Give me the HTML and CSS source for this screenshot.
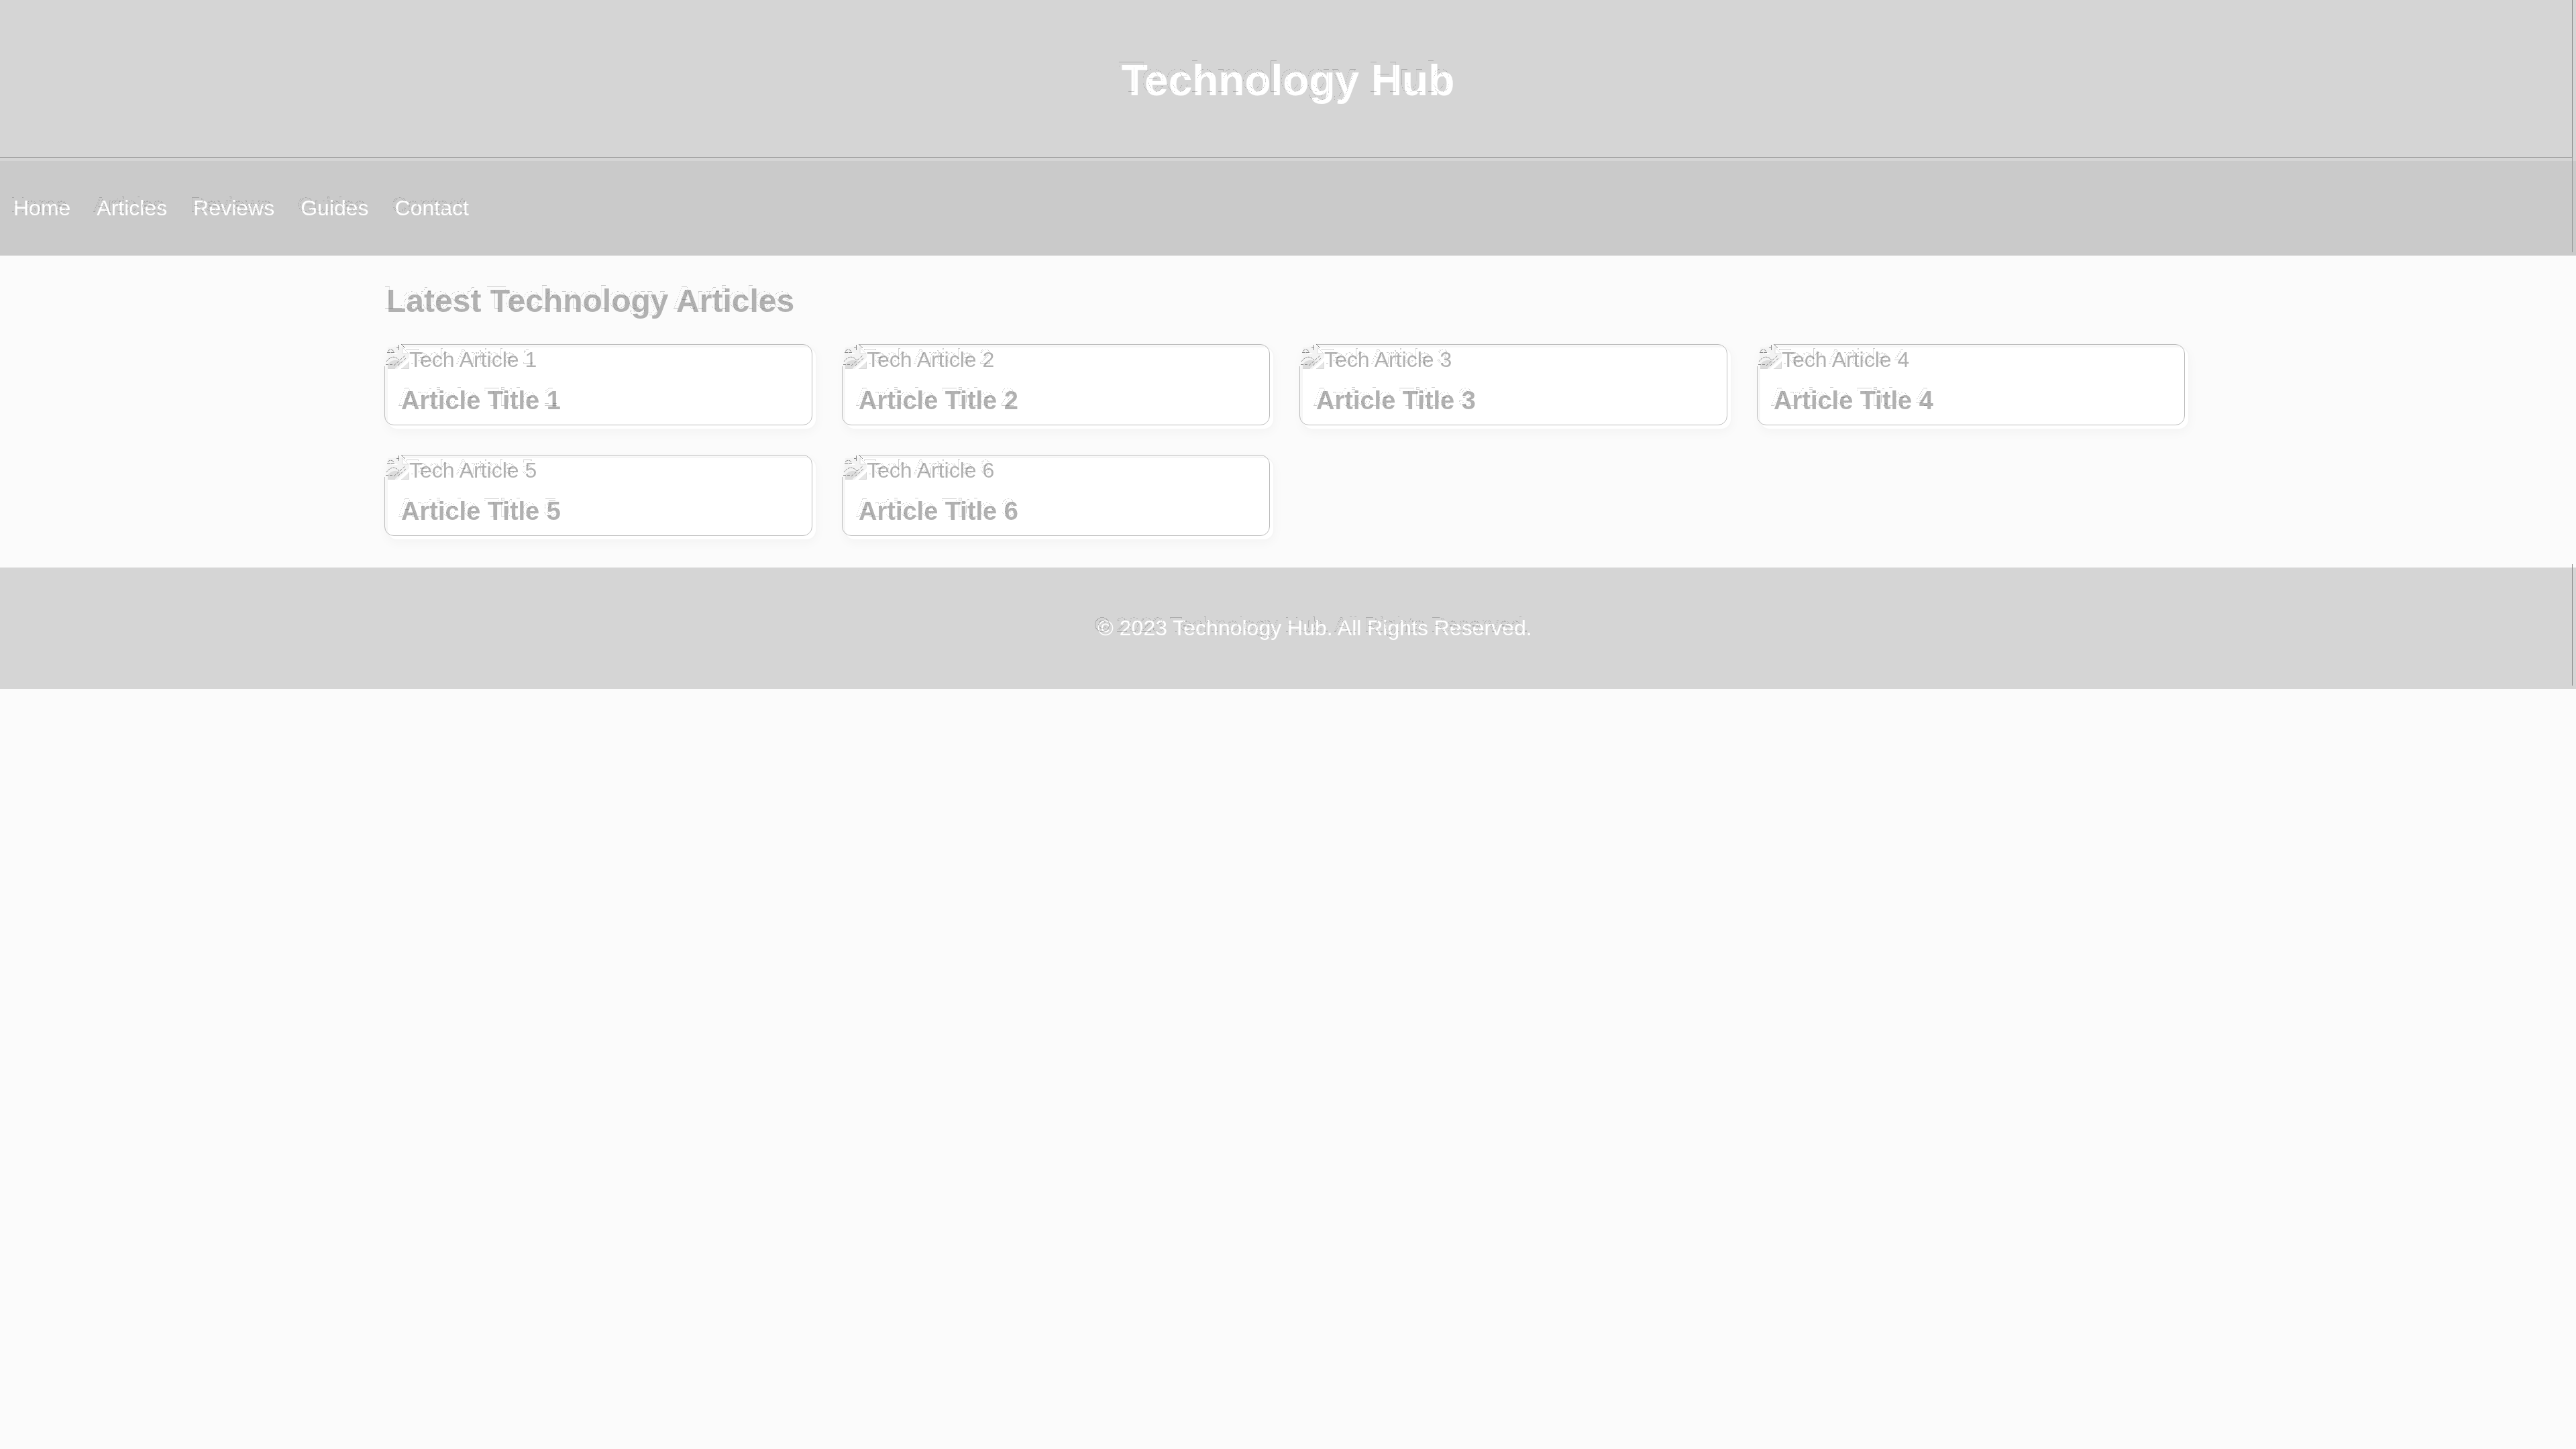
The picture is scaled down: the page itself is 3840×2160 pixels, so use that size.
FILE: index.html
```html
<!DOCTYPE html>
<html lang="en">
<head>
<meta charset="utf-8">
<title>Technology Hub</title>
<link rel="stylesheet" href="styles.css">
</head>
<body>
<svg class="defs" width="0" height="0" aria-hidden="true">
  <defs>
    <filter id="emboss" x="-5%" y="-30%" width="110%" height="160%" color-interpolation-filters="sRGB">
      <feConvolveMatrix in="SourceAlpha" order="3" kernelMatrix="0 -1 0 -1 4 -1 0 -1 0" divisor="1" preserveAlpha="false" result="edge"/>
      <feComponentTransfer in="edge" result="strong"><feFuncA type="linear" slope="1" intercept="-0.75"/></feComponentTransfer>
      <feFlood flood-color="#333333"/>
      <feComposite in2="strong" operator="in"/>
      <feOffset dx="-5" dy="-5" result="ghost"/>
      <feMerge><feMergeNode in="SourceGraphic"/><feMergeNode in="ghost"/></feMerge>
    </filter>
    <symbol id="broken" viewBox="0 0 32 32" overflow="visible">
      <path d="M0 0H22V9H32V15L14 32H0Z" fill="#f3f3f3"/>
      <path d="M22 0L31 9H22Z" fill="#fff" stroke="#dcdcdc"/>
      <path d="M6 10a5 4 0 0 1 9 0z" fill="#fff"/>
      <path d="M0 32V25Q10 14 20 22L10 32Z" fill="#dcdcdc"/>
      <path d="M20 32L32 21V32Z" fill="#e6e6e6"/>
      <path d="M0 31.500H11M20 31.500H31.500V21" fill="none" stroke="#d6d6d6"/>
      <g fill="none" stroke="#888">
        <path d="M-1 7.500H10M0 6a5 5 0 0 1 9 0" stroke-dasharray="5 1"/>
        <path d="M16.500 -4V4M13 .5H17M20 -5L26 1"/>
        <path d="M-2 21Q8 8 18 20" stroke-dasharray="3 1"/>
        <path d="M9 27L27 11M15 27L27 16M-3 25.500H7" stroke-dasharray="4 2"/>
      </g>
    </symbol>
  </defs>
</svg>
<header class="site-header">
  <h1 class="site-title">Technology Hub</h1>
</header>
<nav class="site-nav">
  <ul class="nav-list">
    <li><a href="#">Home</a></li>
    <li><a href="#">Articles</a></li>
    <li><a href="#">Reviews</a></li>
    <li><a href="#">Guides</a></li>
    <li><a href="#">Contact</a></li>
  </ul>
</nav>
<main class="content">
  <h2 class="section-title">Latest Technology Articles</h2>
  <div class="grid">
    <article class="card"><div class="thumb"><svg class="icon"><use href="#broken"/></svg><span>Tech Article 1</span></div><h3 class="card-title">Article Title 1</h3></article>
    <article class="card"><div class="thumb"><svg class="icon"><use href="#broken"/></svg><span>Tech Article 2</span></div><h3 class="card-title">Article Title 2</h3></article>
    <article class="card"><div class="thumb"><svg class="icon"><use href="#broken"/></svg><span>Tech Article 3</span></div><h3 class="card-title">Article Title 3</h3></article>
    <article class="card"><div class="thumb"><svg class="icon"><use href="#broken"/></svg><span>Tech Article 4</span></div><h3 class="card-title">Article Title 4</h3></article>
    <article class="card"><div class="thumb"><svg class="icon"><use href="#broken"/></svg><span>Tech Article 5</span></div><h3 class="card-title">Article Title 5</h3></article>
    <article class="card"><div class="thumb"><svg class="icon"><use href="#broken"/></svg><span>Tech Article 6</span></div><h3 class="card-title">Article Title 6</h3></article>
  </div>
</main>
<footer class="site-footer">
  <p>© 2023 Technology Hub. All Rights Reserved.</p>
</footer>
</body>
</html>
```
FILE: styles.css
```css
* { box-sizing: border-box; }

body {
  margin: 0;
  background: #fbfbfb;
  color: #b1b1b1;
  font-family: "Liberation Sans", Arial, sans-serif;
  font-size: 32px;
  line-height: 37px;
}

.defs { position: absolute; }

.site-header,
.site-nav,
.site-footer {
  position: relative;
  color: #fff;
}

.site-header,
.site-footer { background: #d5d5d5; }

.site-header { padding: 40px; text-align: center; }

.site-title {
  margin: 43px 0;
  font-size: 64px;
  line-height: 74px;
}

.site-nav { padding: 20px; background: #cacaca; }

.nav-list {
  display: flex;
  gap: 39px;
  margin: 32px 0;
  padding: 0;
  list-style: none;
}

.nav-list li { display: flex; }
.nav-list a { color: inherit; text-decoration: none; }

/* thin embossed rules, raised towards the top left */
.site-header::after,
.site-nav::after,
.site-footer::after {
  content: "";
  position: absolute;
  inset: -5px 5px 5px 0;
  border-right: 1px solid #888;
}

.site-header::after { border-bottom: 1px solid #959595; }
.site-nav::after { border-color: #959595; }

.site-title,
.nav-list,
.section-title,
.thumb span,
.card-title,
.site-footer p { filter: url(#emboss); }

.content { width: 70%; margin: 0 auto; padding: 40px 0; }

.section-title {
  margin: 0 0 40px;
  font-size: 48px;
  line-height: 55px;
}

.grid {
  display: grid;
  grid-template-columns: repeat(4, 1fr);
  gap: 40px;
}

.card {
  position: relative;
  border: 2px solid #f6f6f6;
  border-radius: 16px;
  background: #fff;
  box-shadow: 0 4px 16px rgba(0, 0, 0, 0.03);
}

.card::after {
  content: "";
  position: absolute;
  inset: -5px 5px 5px -5px;
  border: 1px solid #bbb;
  border-radius: 14px;
  clip-path: polygon(26px 0, 100% 0, 100% 100%, 0 100%, 0 33px, 26px 33px);
}

.thumb { display: flex; height: 37px; }
.icon { width: 32px; height: 32px; overflow: visible; }

.card-title {
  margin: 0;
  padding: 20px;
  font-size: 38px;
  line-height: 44px;
}

.site-footer { padding: 40px 0 40px 80px; text-align: center; }
.site-footer p { margin: 32px 0; }
```
